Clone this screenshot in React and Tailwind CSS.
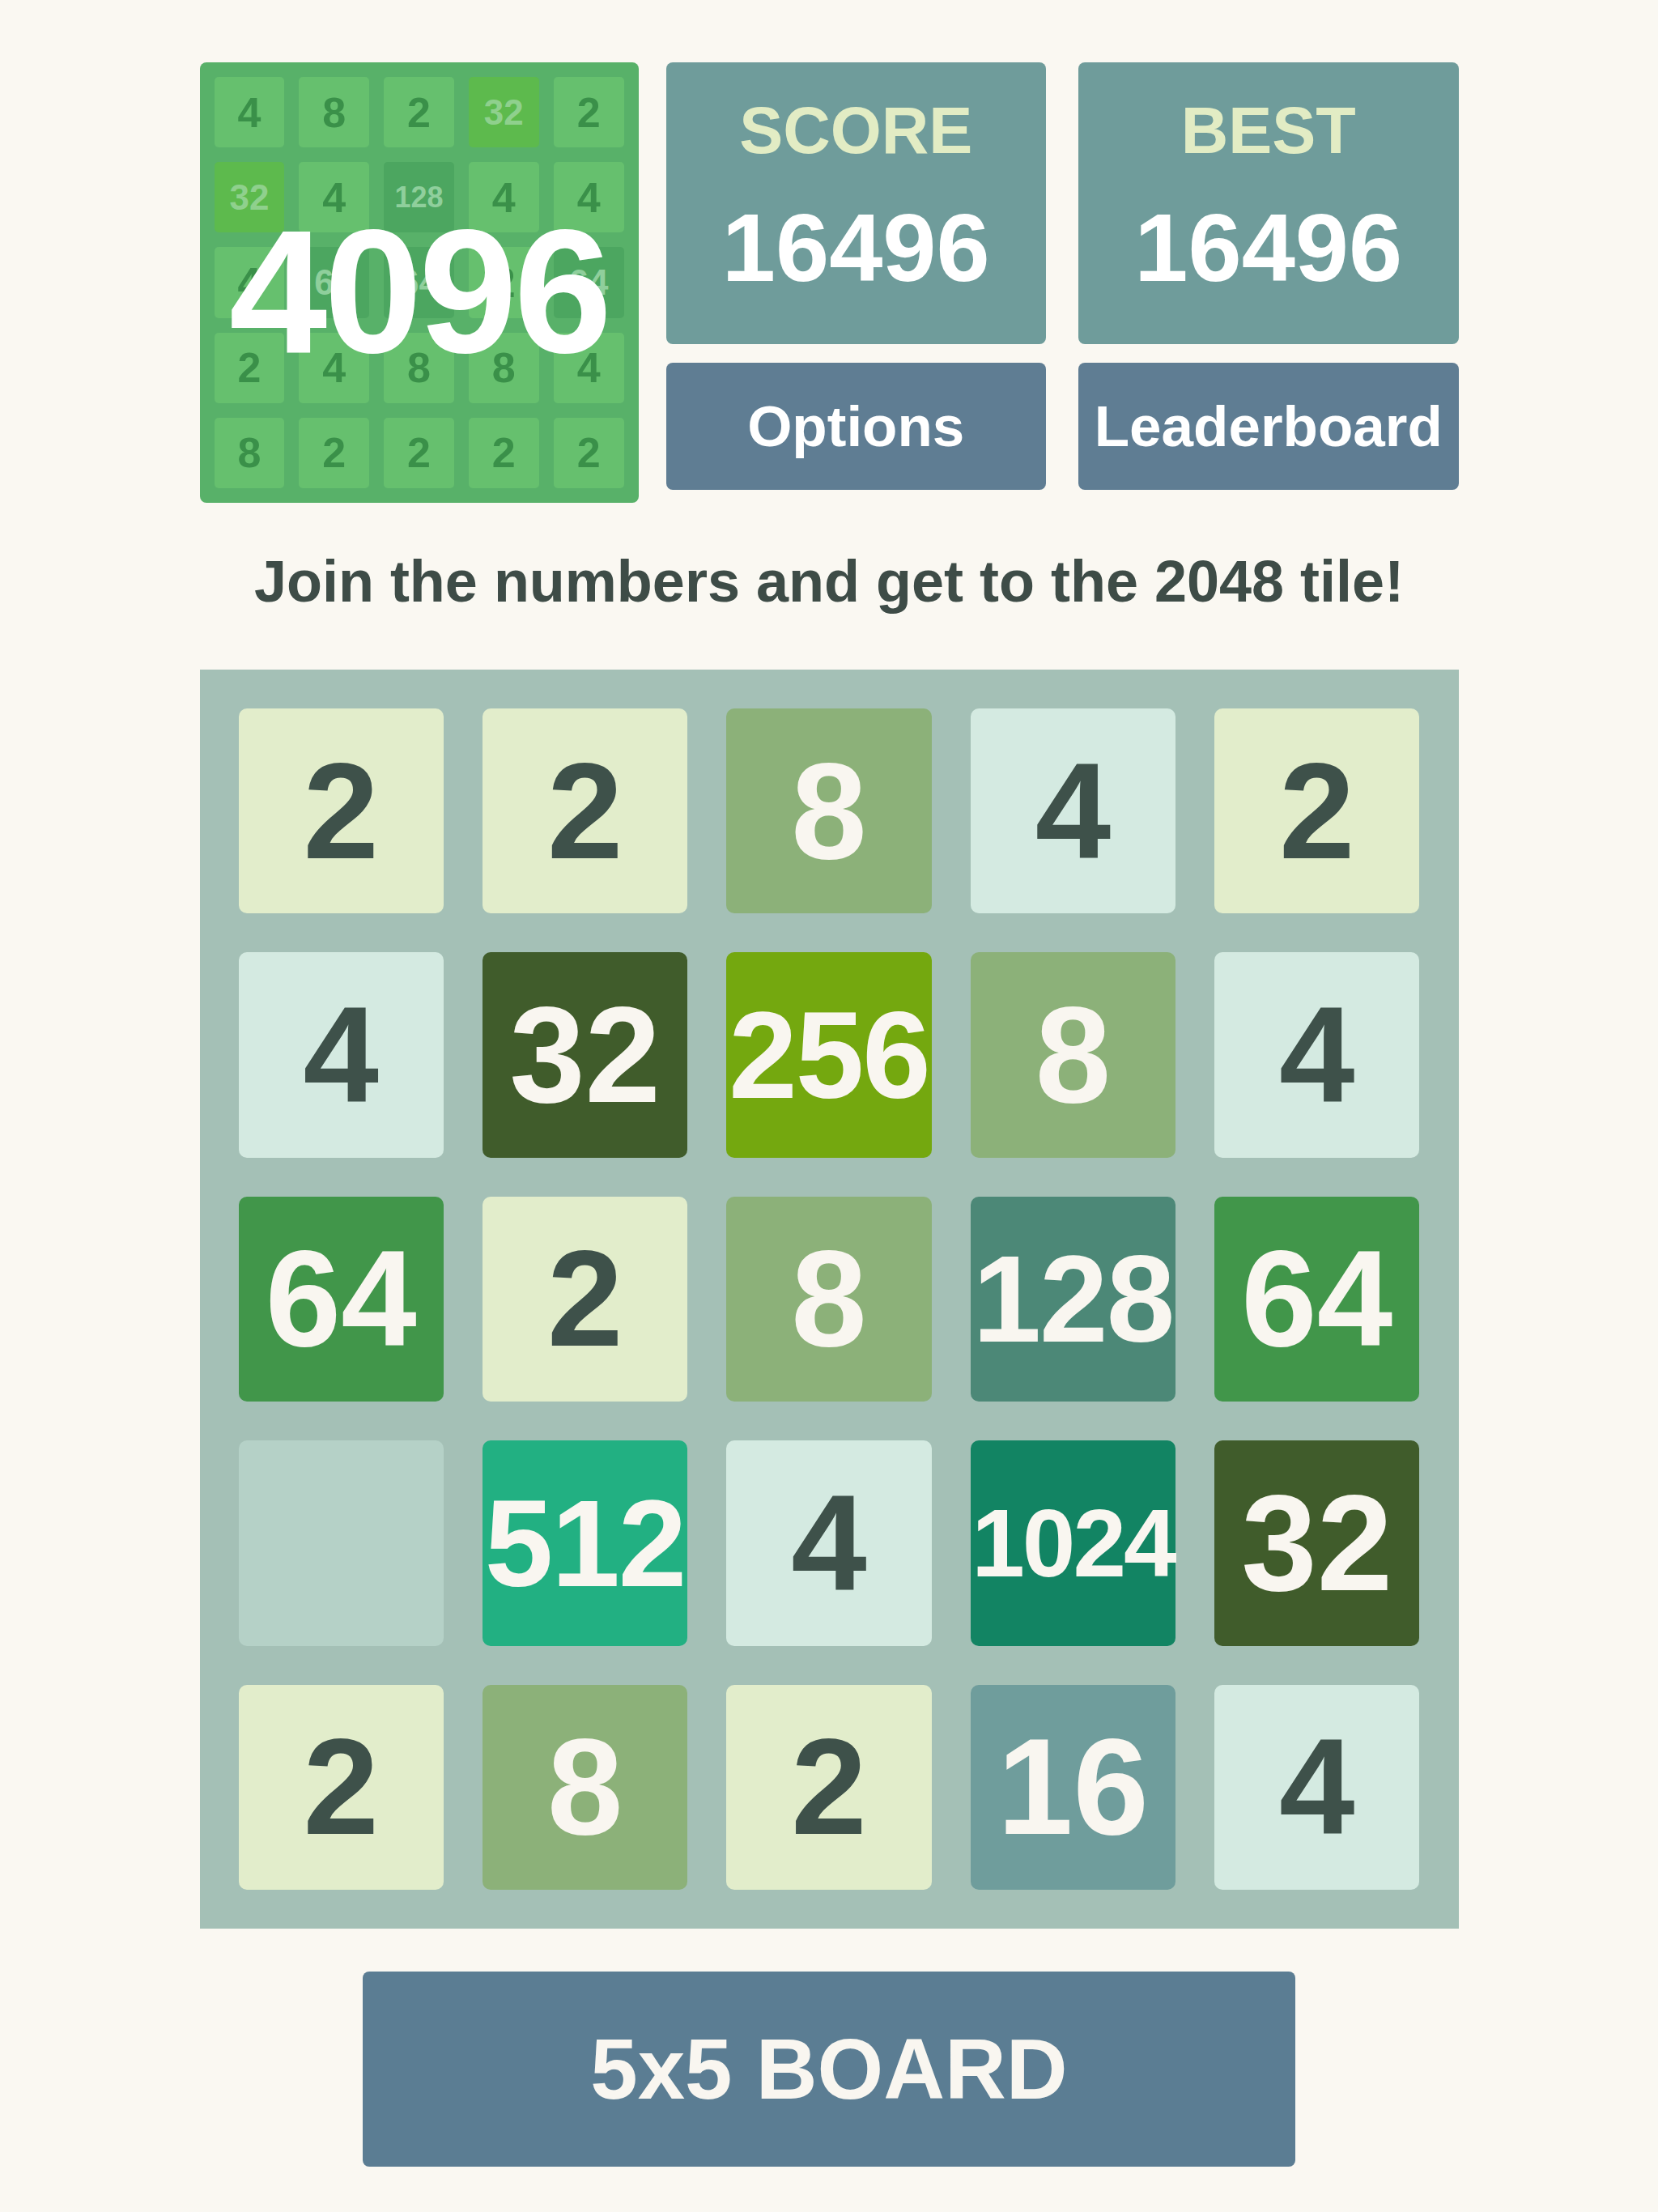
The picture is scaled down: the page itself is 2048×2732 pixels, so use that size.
import React from 'react';

const FONT = { fontFamily: '"Liberation Sans", Arial, Helvetica, sans-serif' };

// mini board drawn inside the 4096 logo
const MINI = [
    ['4', '8', '2', '32h', '2'],
    ['32h', '4', '128d', '4', '4'],
    ['4', '64d', '64d', '2', '64d'],
    ['2', '4', '8', '8', '4'],
    ['8', '2', '2', '2', '2'],
];

const BOARD = [
    [2, 2, 8, 4, 2],
    [4, 32, 256, 8, 4],
    [64, 2, 8, 128, 64],
    [0, 512, 4, 1024, 32],
    [2, 8, 2, 16, 4],
];

const TILE_STYLES = {
    0: 'bg-[#b5d1c7]',
    2: 'bg-[#e2edcb] text-[#3e514a]',
    4: 'bg-[#d4eae1] text-[#3e514a]',
    8: 'bg-[#8cb179] text-[#f9f6f0]',
    16: 'bg-[#6f9d9c] text-[#f9f6f0]',
    32: 'bg-[#405c2b] text-[#f9f6f0]',
    64: 'bg-[#41964a] text-[#f9f6f0]',
    128: 'bg-[#4c8877] text-[#f9f6f0]',
    256: 'bg-[#74a80f] text-[#f9f6f0]',
    512: 'bg-[#22b082] text-[#f9f6f0]',
    1024: 'bg-[#128463] text-[#f9f6f0]',
};

function MiniTile({ value }) {
    const kind = value.slice(-1);
    if (kind === 'h') {
        return (
            <div className="flex items-center justify-center rounded-[5px] bg-[#5dba4d] text-[44px] font-bold text-[#8fd08d]">
                {value.slice(0, -1)}
            </div>
        );
    }
    if (kind === 'd') {
        const label = value.slice(0, -1);
        return (
            <div className={`flex items-center justify-center rounded-[5px] bg-[#4ca660] font-bold text-[#8fcf9c] ${label.length > 2 ? 'text-[36px]' : 'text-[44px]'}`}>
                {label}
            </div>
        );
    }
    return (
        <div className="flex items-center justify-center rounded-[5px] bg-[#66c06e] text-[52px] font-bold text-[#3a9049]">
            {value}
        </div>
    );
}

function Logo() {
    return (
        <div className="relative w-[542px] h-[544px] shrink-0 rounded-[8px] bg-[#58b169] p-[18px]">
            <div className="grid h-full grid-cols-5 grid-rows-5 gap-[18px]">
                {MINI.flat().map((v, i) => (
                    <MiniTile key={i} value={v} />
                ))}
            </div>
            <div className="absolute inset-0 flex items-center justify-center pt-[22px] text-[218px] font-bold leading-none tracking-[-4px] text-white">
                4096
            </div>
        </div>
    );
}

function Tile({ value }) {
    const digits = String(value).length;
    let size = 'text-[168px]';
    if (digits === 3) size = 'text-[152px] tracking-[-2px]';
    if (digits === 4) size = 'text-[118px] tracking-[-3px]';
    return (
        <div className={`flex items-center justify-center rounded-[10px] font-bold leading-none ${TILE_STYLES[value]} ${size}`}>
            {value > 0 ? value : ''}
        </div>
    );
}

export default function App() {
    return (
        <div className="min-h-screen bg-[#faf8f2]" style={FONT}>
            <div className="mx-auto w-[1555px] pt-[77px]">
                {/* Header */}
                <div className="flex items-start">
                    <Logo />
                    <div className="ml-[34px] grid flex-1 grid-cols-2 gap-x-[40px] gap-y-[23px]">
                        {['SCORE', 'BEST'].map((label) => (
                            <div key={label} className="flex h-[348px] flex-col items-center rounded-[8px] bg-[#6f9c9b]">
                                <div className="mt-[44px] text-[81px] font-bold leading-none text-[#e2ecc4]">{label}</div>
                                <div className="mt-[44px] text-[119px] font-bold leading-none text-white">16496</div>
                            </div>
                        ))}
                        {['Options', 'Leaderboard'].map((label) => (
                            <button
                                key={label}
                                className="flex h-[157px] items-center justify-center rounded-[8px] bg-[#5f7d93] text-[71px] font-bold leading-none text-white"
                            >
                                {label}
                            </button>
                        ))}
                    </div>
                </div>

                <p className="mt-[61px] text-center text-[72px] font-bold leading-none text-[#3e4c47]">
                    Join the numbers and get to the 2048 tile!
                </p>

                {/* Board */}
                <div className="mt-[73px] grid h-[1555px] grid-cols-5 grid-rows-5 gap-[48px] bg-[#a4c0b6] p-[48px]">
                    {BOARD.flat().map((v, i) => (
                        <Tile key={i} value={v} />
                    ))}
                </div>

                <div className="flex justify-center">
                    <button className="mt-[53px] flex h-[241px] w-[1152px] items-center justify-center rounded-[8px] bg-[#5b7d93] text-[105px] font-bold leading-none text-[#f9f6f0]">
                        5x5 BOARD
                    </button>
                </div>
            </div>
        </div>
    );
}
